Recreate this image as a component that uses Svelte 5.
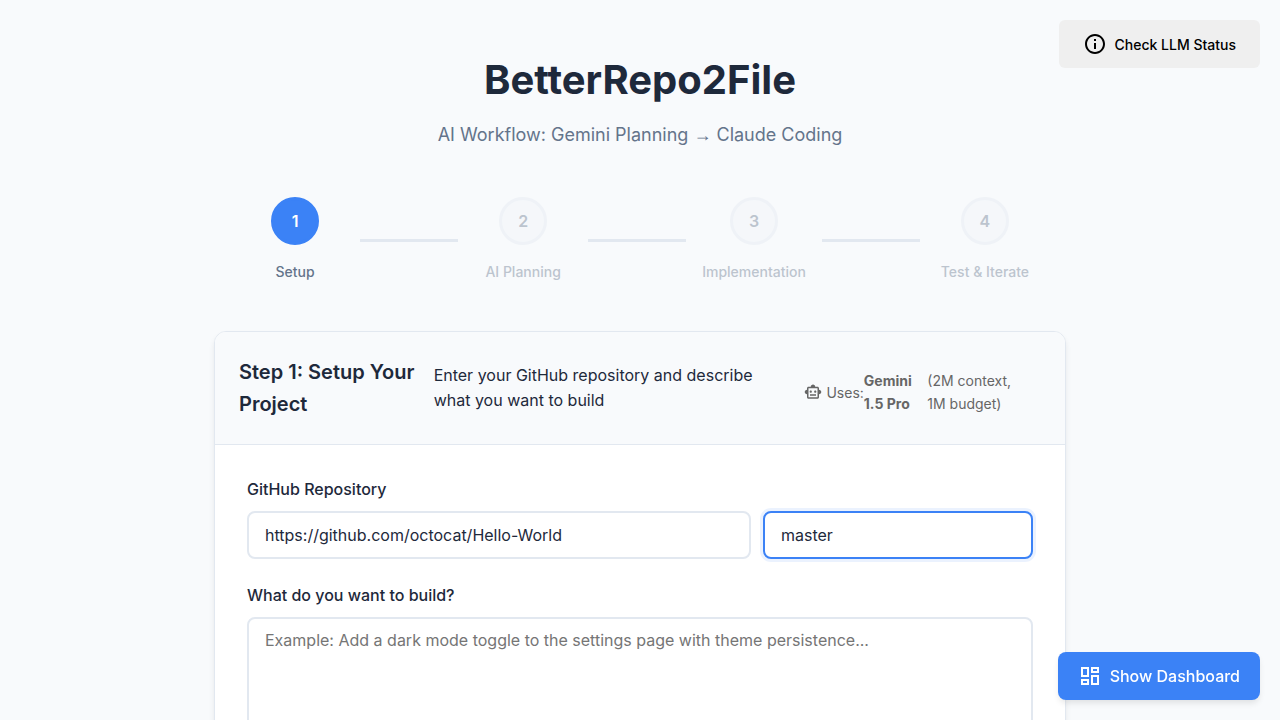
<script>
  const steps = ['Setup', 'AI Planning', 'Implementation', 'Test & Iterate'];
  let current = $state(0);
  let repo = $state('https://github.com/octocat/Hello-World');
  let branch = $state('master');
  let goal = $state('');
  let activeField = $state('branch');
</script>

<button class="status" type="button">
  <svg viewBox="0 0 24 24" width="24" height="24" aria-hidden="true">
    <path d="M11 7h2v2h-2zm0 4h2v6h-2zm1-9C6.48 2 2 6.48 2 12s4.48 10 10 10 10-4.48 10-10S17.52 2 12 2zm0 18c-4.41 0-8-3.59-8-8s3.59-8 8-8 8 3.59 8 8-3.59 8-8 8z" />
  </svg>
  Check LLM Status
</button>

<main class="container">
  <header class="intro">
    <h1>BetterRepo2File</h1>
    <p>AI Workflow: Gemini Planning <span class="arrow">→</span> Claude Coding</p>
  </header>

  <div class="steps">
    {#each steps as step, i}
      {#if i > 0}
        <div class="connector"></div>
      {/if}
      <div class="step" class:current={i === current}>
        <div class="number">{i + 1}</div>
        <div class="name">{step}</div>
      </div>
    {/each}
  </div>

  <section class="card">
    <div class="card-head">
      <h2>Step 1: Setup Your Project</h2>
      <p>Enter your GitHub repository and describe what you want to build</p>
      <div class="model">
        <svg viewBox="0 0 24 24" width="18" height="18" aria-hidden="true">
          <path d="M20 9V7c0-1.1-.9-2-2-2h-3c0-1.66-1.34-3-3-3S9 3.34 9 5H6c-1.1 0-2 .9-2 2v2c-1.66 0-3 1.34-3 3s1.34 3 3 3v4c0 1.1.9 2 2 2h12c1.1 0 2-.9 2-2v-4c1.66 0 3-1.34 3-3s-1.34-3-3-3zm-2 10H6V7h12v12zm-9-6c-.83 0-1.5-.67-1.5-1.5S8.17 10 9 10s1.5.67 1.5 1.5S9.83 13 9 13zm7.5-1.5c0 .83-.67 1.5-1.5 1.5s-1.5-.67-1.5-1.5.67-1.5 1.5-1.5 1.5.67 1.5 1.5zM8 15h8v2H8v-2z" />
        </svg>
        <span class="uses">Uses:</span>
        <strong>Gemini 1.5 Pro</strong>
        <span>(2M context, 1M budget)</span>
      </div>
    </div>

    <form class="card-body">
      <div class="field">
        <label for="repo">GitHub Repository</label>
        <div class="repo-row">
          <input id="repo" type="text" bind:value={repo} class:active={activeField === 'repo'} onfocus={() => (activeField = 'repo')} />
          <input type="text" aria-label="Branch" bind:value={branch} class:active={activeField === 'branch'} onfocus={() => (activeField = 'branch')} />
        </div>
      </div>
      <div class="field">
        <label for="goal">What do you want to build?</label>
        <textarea
          id="goal"
          rows="6"
          placeholder="Example: Add a dark mode toggle to the settings page with theme persistence..."
          bind:value={goal}
          class:active={activeField === 'goal'}
          onfocus={() => (activeField = 'goal')}
        ></textarea>
      </div>
    </form>
  </section>
</main>

<button class="dashboard" type="button">
  <svg viewBox="0 0 24 24" width="24" height="24" aria-hidden="true">
    <path d="M19 5v2h-4V5h4M9 5v6H5V5h4m10 8v6h-4v-6h4M9 17v2H5v-2h4M21 3h-8v6h8V3zM11 3H3v10h8V3zm10 8h-8v10h8V11zm-10 4H3v6h8v-6z" />
  </svg>
  Show Dashboard
</button>

<style>
  :global(*) {
    box-sizing: border-box;
  }

  :global(body) {
    margin: 0;
    background: #f8fafc;
    color: #1e293b;
    font-family: Inter, sans-serif;
    font-size: 16px;
    line-height: 25px;
  }

  h1,
  h2,
  p {
    margin: 0;
  }

  svg {
    flex: none;
    fill: currentColor;
  }

  button {
    display: flex;
    align-items: center;
    gap: 8px;
    height: 48px;
    border: 0;
    border-radius: 8px;
    font-family: inherit;
    font-weight: 500;
    cursor: pointer;
  }

  .status {
    position: fixed;
    top: 20px;
    right: 20px;
    z-index: 10;
    padding: 0 24px;
    border-radius: 6px;
    background: #efefef;
    color: #000;
    font-size: 14px;
  }

  .dashboard {
    position: fixed;
    right: 20px;
    bottom: 20px;
    z-index: 10;
    padding: 0 20px;
    background: #3b82f6;
    color: #fff;
    font-size: 16px;
    box-shadow: 0 4px 6px -1px rgba(0, 0, 0, 0.1);
  }

  .container {
    max-width: 900px;
    margin: 0 auto;
    padding: 48px 24px;
  }

  .intro {
    margin-bottom: 48px;
    text-align: center;
  }

  h1 {
    margin-bottom: 8px;
    font-size: 40px;
    font-weight: 700;
    line-height: 64px;
  }

  .intro p {
    color: #64748b;
    font-size: 18px;
    line-height: 29px;
  }

  .arrow {
    font-family: "Liberation Sans", sans-serif;
    line-height: 19px;
  }

  .steps {
    display: flex;
    align-items: center;
    margin-bottom: 48px;
    padding: 0 32px;
  }

  .step {
    display: flex;
    flex: 1;
    flex-direction: column;
    align-items: center;
    gap: 16px;
    color: #64748b;
    opacity: 0.4;
  }

  .step.current {
    opacity: 1;
  }

  .number {
    display: flex;
    align-items: center;
    justify-content: center;
    width: 48px;
    height: 48px;
    border: 3px solid #e2e8f0;
    border-radius: 50%;
    background: #f1f5f9;
    font-weight: 600;
    line-height: 24px;
  }

  .current .number {
    border-color: #3b82f6;
    background: #3b82f6;
    color: #fff;
  }

  .name {
    font-size: 14px;
    font-weight: 500;
    line-height: 22px;
    white-space: nowrap;
  }

  .connector {
    flex: 1;
    height: 3px;
    margin: 0 16px;
    background: #e2e8f0;
  }

  .card {
    overflow: hidden;
    border: 1px solid #e2e8f0;
    border-radius: 12px;
    background: #fff;
    box-shadow: 0 4px 6px -1px rgba(0, 0, 0, 0.1);
  }

  .card-head {
    display: flex;
    align-items: center;
    gap: 16px;
    padding: 24px;
    border-bottom: 1px solid #e2e8f0;
    background: #f8fafc;
  }

  h2 {
    font-size: 20px;
    font-weight: 600;
    line-height: 32px;
  }

  .model {
    display: flex;
    align-items: center;
    margin-top: 8px;
    padding-right: 8px;
    color: #666;
    font-size: 14px;
    line-height: 23px;
  }

  .uses {
    margin-left: 4px;
  }

  .card-body {
    display: grid;
    gap: 24px;
    padding: 32px;
  }

  label {
    display: block;
    margin-bottom: 10px;
    font-weight: 500;
    line-height: 24px;
  }

  .repo-row {
    display: grid;
    grid-template-columns: 28fr 15fr;
    gap: 12px;
  }

  input,
  textarea {
    display: block;
    width: 100%;
    min-width: 0;
    padding: 0 16px;
    border: 2px solid #e2e8f0;
    border-radius: 8px;
    outline: none;
    background: #fff;
    color: #1e293b;
    font: inherit;
  }

  input {
    height: 48px;
  }

  textarea {
    min-height: 144px;
    padding: 12px 16px;
    line-height: 19px;
    resize: vertical;
  }

  textarea::placeholder {
    color: #757575;
  }

  .active {
    border-color: #3b82f6;
    box-shadow: 0 0 0 3px rgba(59, 130, 246, 0.1);
  }
</style>
